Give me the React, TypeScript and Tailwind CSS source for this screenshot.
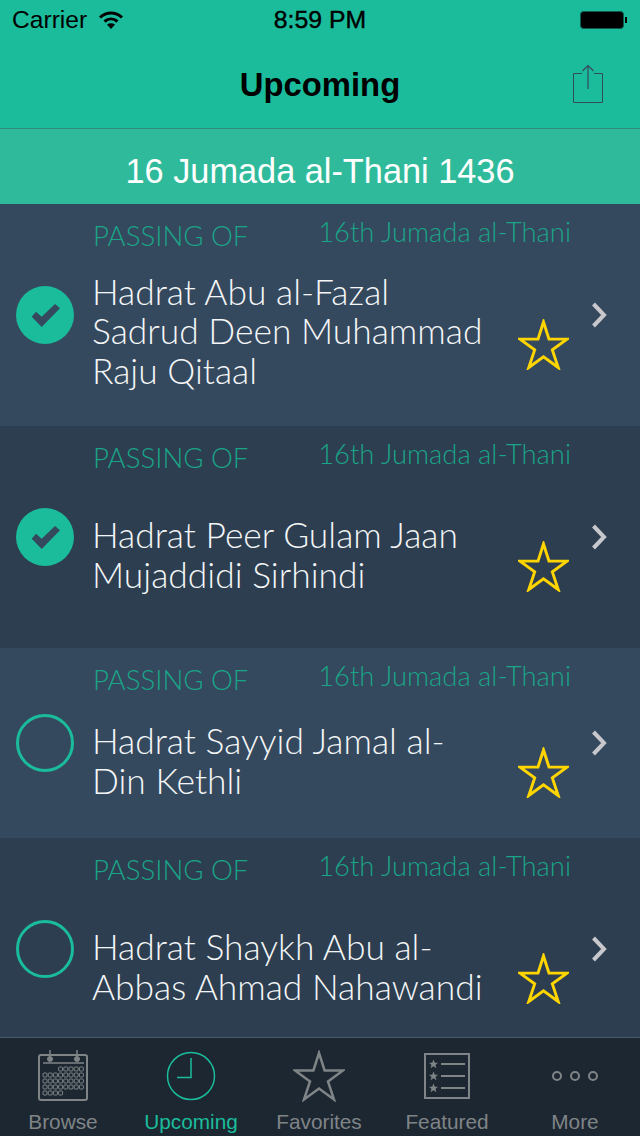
const checkPoints = '-13.3,1.7 -9,-3.3 -3.3,1.7 10,-11 15,-6.7 -3.3,12';

interface RowData {
  name: string[];
  done: boolean;
  alt: boolean;
  height: string;
  nameOffset: string;
}

const rows: RowData[] = [
  { name: ['Hadrat Abu al-Fazal', 'Sadrud Deen Muhammad', 'Raju Qitaal'], done: true, alt: false, height: 'h-[222px]', nameOffset: 'mb-[7px]' },
  { name: ['Hadrat Peer Gulam Jaan', 'Mujaddidi Sirhindi'], done: true, alt: true, height: 'h-[222px]', nameOffset: 'mb-[4px]' },
  { name: ['Hadrat Sayyid Jamal al-', 'Din Kethli'], done: false, alt: false, height: 'h-[190px]', nameOffset: 'mb-[4px]' },
  { name: ['Hadrat Shaykh Abu al-', 'Abbas Ahmad Nahawandi'], done: false, alt: true, height: 'h-[222px]', nameOffset: 'mb-[4px]' },
];

function StatusCircle({ done }: { done: boolean }) {
  return (
    <svg width="58" height="58" viewBox="-29 -29 58 58">
      {done ? (
        <>
          <circle r="29" fill="#1abc9c" />
          <polygon points={checkPoints} fill="#34495e" />
        </>
      ) : (
        <circle r="27.5" fill="none" stroke="#1abc9c" strokeWidth="3" />
      )}
    </svg>
  );
}

function Star({ size, color, width }: { size: number; color: string; width: number }) {
  return (
    <svg width={size} height={size} viewBox="0 0 52 52">
      <path
        d="M26 3 L31.6 20.5 L50 20.5 L35 31.5 L41 49.5 L26 38.5 L11 49.5 L17 31.5 L2 20.5 L20.4 20.5 Z"
        fill="none"
        stroke={color}
        strokeWidth={width}
      />
    </svg>
  );
}

function Row({ row }: { row: RowData }) {
  return (
    <div className={`flex shrink-0 items-center ${row.height} ${row.alt ? 'bg-[#2c3e50]' : 'bg-[#34495e]'}`}>
      <div className="w-[93px] shrink-0 pl-4 flex items-center">
        <StatusCircle done={row.done} />
      </div>
      <div className="flex flex-col flex-1 self-stretch min-w-0">
        <div className="flex justify-between h-[39px] pt-[12px] font-['Lato'] font-light text-[#1aa588]">
          <span className="text-[27.6px] leading-[39px]">PASSING OF</span>
          <span className="text-[27.4px] leading-[32px]">16th Jumada al-Thani</span>
        </div>
        <div className="flex flex-1 items-center">
          <div className={`flex-1 -ml-[1px] font-['Lato'] font-light text-[35.4px] leading-[39.5px] text-[#f4f6f7] ${row.nameOffset}`}>
            {row.name.map((line) => (
              <div key={line} className="whitespace-nowrap">{line}</div>
            ))}
          </div>
          <div className="mt-[19px] mr-[2px] shrink-0">
            <Star size={51} color="#ffd500" width={3} />
          </div>
        </div>
      </div>
      <div className="w-[69px] shrink-0 flex justify-center pr-[11px]">
        <svg width="18" height="28" viewBox="0 0 18 28">
          <path d="M2.5 3 L13 14 L2.5 25" fill="none" stroke="#c7c7cc" strokeWidth="4" />
        </svg>
      </div>
    </div>
  );
}

function Tab({ label, active, children }: { label: string; active?: boolean; children: React.ReactNode }) {
  return (
    <div className="flex-1 flex flex-col items-center pr-[2px]">
      <div className="h-[72px] flex items-center justify-center pt-[4px]">{children}</div>
      <span className={`text-[20.8px] leading-[24px] ${active ? 'text-[#1abc9c]' : 'text-[#7f8487]'}`}>{label}</span>
    </div>
  );
}

function CalendarIcon() {
  const cells: [number, number][] = [];
  const rowsOf = [
    [3, 7],
    [0, 7],
    [0, 7],
    [0, 7],
    [0, 3],
  ];
  rowsOf.forEach(([from, to], r) => {
    for (let c = from; c <= to; c++) cells.push([c, r]);
  });
  return (
    <svg width="50" height="52" viewBox="0 0 50 52" fill="none" stroke="#7f8487">
      <rect x="1" y="5" width="48" height="45" rx="2" strokeWidth="2" />
      <path d="M5 13 H46" strokeWidth="1.5" />
      <path d="M12 0 V10 M39 0 V10" strokeWidth="1.5" />
      <circle cx="12" cy="9" r="2.5" fill="#7f8487" />
      <circle cx="39" cy="9" r="2.5" fill="#7f8487" />
      {cells.map(([c, r]) => (
        <rect key={`${c}-${r}`} x={5 + c * 5.2} y={17 + r * 6} width="4" height="4" rx="1" strokeWidth="1" />
      ))}
    </svg>
  );
}

function FeaturedIcon() {
  return (
    <svg width="46" height="46" viewBox="0 0 46 46" fill="none" stroke="#7f8487">
      <rect x="1" y="1" width="44" height="44" strokeWidth="2" />
      {[11, 23, 35].map((y) => (
        <g key={y}>
          <path
            d={`M9.5 ${y - 4.5} L10.8 ${y - 1.2} L14 ${y - 1.2} L11.5 ${y + 1} L12.5 ${y + 4.2} L9.5 ${y + 2.2} L6.5 ${y + 4.2} L7.5 ${y + 1} L5 ${y - 1.2} L8.2 ${y - 1.2} Z`}
            fill="#7f8487"
            stroke="none"
          />
          <path d={`M17 ${y} H41`} strokeWidth="2" />
        </g>
      ))}
    </svg>
  );
}

export default function App() {
  return (
    <div className="relative h-[1136px] w-[640px] overflow-hidden flex flex-col bg-[#2c3e50] font-['Liberation_Sans',sans-serif]">
      {/* status + nav */}
      <div className="bg-[#1abc9c] h-[129px] shrink-0 border-b border-[#2f8a7c]">
        <div className="h-[40px] flex items-center justify-between pl-3 pr-[13px] text-black relative">
          <div className="flex items-center gap-[11px]">
            <span className="text-[24.6px] leading-none">Carrier</span>
            <svg width="26" height="20" viewBox="0 0 26 20" fill="none" stroke="#000">
              <path d="M2 7.5 C8.5 1.5 17.5 1.5 24 7.5" strokeWidth="3" />
              <path d="M6.5 11.5 C10.5 8 15.5 8 19.5 11.5" strokeWidth="3" />
              <path d="M13 19 L9 14.5 C11.5 12.7 14.5 12.7 17 14.5 Z" fill="#000" stroke="none" />
            </svg>
          </div>
          <span className="absolute left-0 right-0 text-center text-[24.8px] leading-none font-normal [-webkit-text-stroke:0.4px_black]">8:59 PM</span>
          <svg width="47" height="18" viewBox="0 0 47 18">
            <rect x="0.5" y="0.5" width="43" height="17" rx="3" fill="#000" stroke="#0d5c4d" />
            <rect x="45" y="6" width="2" height="6" fill="#000" />
          </svg>
        </div>
        <div className="h-[88px] flex items-center justify-center relative">
          <span className="text-[32.8px] font-bold leading-none text-black mt-[2px]">Upcoming</span>
          <svg className="absolute right-[36px] top-[24px]" width="32" height="40" viewBox="0 0 32 40" fill="none" stroke="#34495e">
            <path d="M10.5 9.5 H2 V38.5 H31 V9.5 H22.5" strokeWidth="1" transform="translate(-0.5 0)" />
            <path d="M16 2 V25 M10.5 7 L16 1.5 L21.5 7" strokeWidth="1.2" />
          </svg>
        </div>
      </div>
      {/* date bar */}
      <div className="h-[75px] shrink-0 bg-[#2fbb9b] flex items-center justify-center pt-[9px] text-white text-[34.3px] leading-none">
        16 Jumada al-Thani 1436
      </div>
      {/* list */}
      <div className="flex flex-col flex-1 min-h-0">
        {rows.map((row) => (
          <Row key={row.name[0]} row={row} />
        ))}
      </div>
      {/* tab bar */}
      <div className="absolute left-0 right-0 bottom-0 h-[99px] bg-[#1d2731] border-t border-[#46596d] flex px-0">
        <Tab label="Browse"><CalendarIcon /></Tab>
        <Tab label="Upcoming" active>
          <svg width="50" height="50" viewBox="0 0 50 50" fill="none" stroke="#1abc9c" strokeWidth="1.5">
            <circle cx="25" cy="25" r="23.5" />
            <path d="M25 7 V26.5 H11" />
          </svg>
        </Tab>
        <Tab label="Favorites"><Star size={52} color="#7f8487" width={2.5} /></Tab>
        <Tab label="Featured"><FeaturedIcon /></Tab>
        <Tab label="More">
          <svg width="46" height="12" viewBox="0 0 46 12" fill="none" stroke="#7f8487" strokeWidth="2">
            <circle cx="5" cy="6" r="4" />
            <circle cx="23" cy="6" r="4" />
            <circle cx="41" cy="6" r="4" />
          </svg>
        </Tab>
      </div>
    </div>
  );
}
